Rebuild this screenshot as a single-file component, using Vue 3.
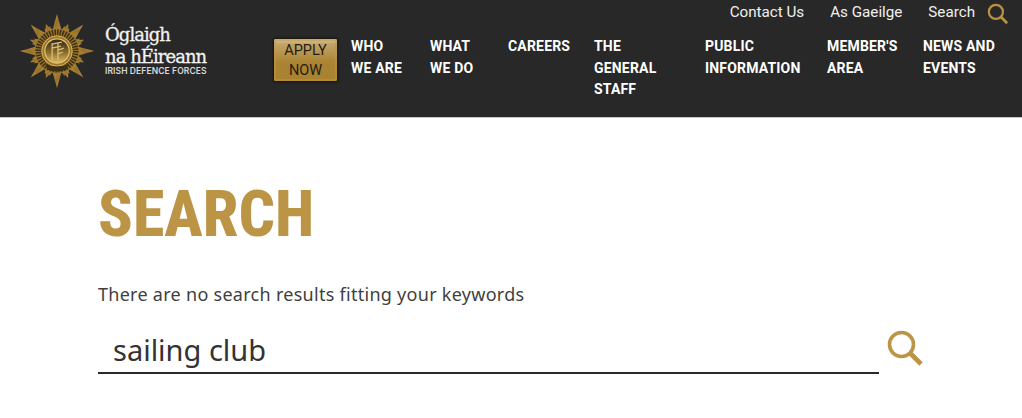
<script setup>
const navItems = [
  { lines: ['WHO', 'WE ARE'] },
  { lines: ['WHAT', 'WE DO'] },
  { lines: ['CAREERS'] },
  { lines: ['THE', 'GENERAL', 'STAFF'] },
  { lines: ['PUBLIC', 'INFORMATION'] },
  { lines: ["MEMBER'S", 'AREA'] },
  { lines: ['NEWS AND', 'EVENTS'] },
]
const rays = Array.from({ length: 16 }, (_, i) => i * 22.5)
const smallRays = Array.from({ length: 32 }, (_, i) => i * 11.25 + 5.625)
</script>

<template>
  <div class="page">
    <header class="header">
      <a class="logo">
        <svg class="crest" viewBox="0 0 80 80" width="78" height="78" aria-hidden="true">
          <defs>
            <linearGradient id="gold" x1="0" y1="0" x2="1" y2="1">
              <stop offset="0" stop-color="#d2ab56" />
              <stop offset="0.5" stop-color="#94702a" />
              <stop offset="1" stop-color="#c09842" />
            </linearGradient>
            <linearGradient id="inner" x1="0" y1="0" x2="0" y2="1">
              <stop offset="0" stop-color="#2c261c" />
              <stop offset="0.55" stop-color="#8a6a28" />
              <stop offset="1" stop-color="#e0bd6a" />
            </linearGradient>
          </defs>
          <g transform="translate(40 40)">
            <polygon v-for="r in rays" :key="r" :transform="`rotate(${r})`" :points="r % 45 === 0 ? '-5,-20 0,-38 5,-20' : '-4,-20 0,-30 4,-20'" fill="url(#gold)" />
            <polygon v-for="r in smallRays" :key="'s' + r" :transform="`rotate(${r})`" points="-3,-18 0,-27 3,-18" fill="#a27f32" />
            <circle r="23" fill="#9a762b" />
            <circle r="19" fill="none" stroke="#3d2f14" stroke-width="6" stroke-dasharray="1.5 1.2" />
            <circle r="15.5" fill="none" stroke="#d6b25f" stroke-width="1" />
            <circle r="12.5" fill="url(#inner)" stroke="#e2c474" stroke-width="1.2" />
            <path d="M-5,-8 V9 M1,-8 V9 M-5,-7 L5,-9 M-5,-3 L4,-5 M1,-1 L7,-3 M1,3 L6,1" stroke="#dcc07a" stroke-width="1.3" fill="none" />
            <path d="M-12,13 Q0,19 12,13 L10,19 Q0,23 -10,19 Z" fill="#3b2f17" />
          </g>
        </svg>
        <div class="logo-text">
          <div class="logo-name">Óglaigh</div>
          <div class="logo-name">na hÉireann</div>
          <div class="logo-sub">IRISH DEFENCE FORCES</div>
        </div>
      </a>

      <div class="header-right">
        <div class="utility">
          <a>Contact Us</a>
          <a>As Gaeilge</a>
          <a class="util-search">
            <span>Search</span>
            <svg viewBox="0 0 24 24" width="22" height="22" fill="none" stroke="#b8923f" aria-hidden="true">
              <circle cx="9.7" cy="9.7" r="7.7" stroke-width="2.4" />
              <path d="M15.3 15.3 L22 22" stroke-width="3" />
            </svg>
          </a>
        </div>
        <nav class="main-nav">
          <a class="apply">APPLY<br />NOW</a>
          <ul class="nav-list">
            <li v-for="item in navItems" :key="item.lines[0]">
              <template v-for="(l, i) in item.lines" :key="l">
                <br v-if="i > 0" />{{ l }}
              </template>
            </li>
          </ul>
        </nav>
      </div>
    </header>

    <main class="content">
      <h1 class="title">SEARCH</h1>
      <p class="message">There are no search results fitting your keywords</p>
      <form class="search-form" @submit.prevent>
        <div class="field">sailing club</div>
        <svg class="form-icon" viewBox="0 0 36 36" width="36" height="36" fill="none" stroke="#bb9445" aria-hidden="true">
          <circle cx="14.5" cy="14.5" r="12" stroke-width="3.6" />
          <path d="M23 23 L34 34" stroke-width="4.6" />
        </svg>
      </form>
    </main>
  </div>
</template>

<style>
html, body { margin: 0; background: #fff; }
</style>

<style scoped>
.page { width: 1022px; height: 418px; overflow: hidden; background: #fff; font-family: Roboto, "Noto Sans", sans-serif; }
.header { height: 117px; background: #282828; display: flex; border-bottom: 1px solid #c9c9c9; box-sizing: content-box; }
.logo { display: flex; width: 255px; padding: 12px 0 0 18px; box-sizing: border-box; color: #f2f2f2; }
.crest { flex: none; }
.logo-text { margin: 12px 0 0 9px; }
.logo-name { font-family: "DejaVu Serif", serif; font-size: 18px; line-height: 21.5px; letter-spacing: -0.95px; -webkit-text-stroke: 0.3px #f2f2f2; }
.logo-sub { margin-top: -3px; font-family: Inter, sans-serif; font-size: 8.5px; font-weight: 600; line-height: 14px; letter-spacing: 0.1px; color: #d8d8d8; }
.header-right { flex: 1; display: flex; flex-direction: column; }
.utility { display: flex; justify-content: flex-end; align-items: flex-start; gap: 26px; height: 38px; padding: 3px 13px 0 0; box-sizing: border-box; font-size: 15.2px; line-height: 18px; color: #f0f0f0; }
.util-search { display: flex; gap: 12px; }
.main-nav { display: flex; align-items: flex-start; padding-left: 18px; }
.apply { width: 65px; height: 44px; box-sizing: border-box; border: 1px solid #1e1a10; border-radius: 2px; background: linear-gradient(#d9c39a 0, #c3a468 12%, #ab8433 55%, #a98230 100%); box-shadow: inset 0 0 0 2px rgba(190,150,70,.5), 0 0 3px rgba(0,0,0,.5); text-align: center; color: #231d10; font-size: 14.5px; line-height: 20px; padding-top: 2px; }
.nav-list { list-style: none; margin: -2px 0 0; padding: 0 0 0 13px; display: grid; grid-template-columns: 79px 78px 86px 111px 122px 96px 90px; color: #fff; font-size: 14px; font-weight: 700; line-height: 21.5px; letter-spacing: 0.18px; }
.content { padding: 0 0 0 98px; }
.title { margin: 57px 0 0; font-family: Roboto, sans-serif; font-stretch: condensed; font-size: 64px; font-weight: 800; line-height: 80px; color: #bb9445; }
.message { margin: 27px 0 0; font-family: "Noto Sans", sans-serif; font-size: 18px; line-height: 24px; letter-spacing: 0.28px; color: #3f3f3f; }
.search-form { display: flex; align-items: flex-start; margin-top: 23px; }
.field { width: 781px; height: 45px; box-sizing: border-box; border-bottom: 2px solid #2a2a2a; padding-left: 15px; font-family: "Noto Sans", sans-serif; font-size: 29px; line-height: 42px; color: #333; }
.form-icon { margin: 1px 0 0 8px; }
</style>
